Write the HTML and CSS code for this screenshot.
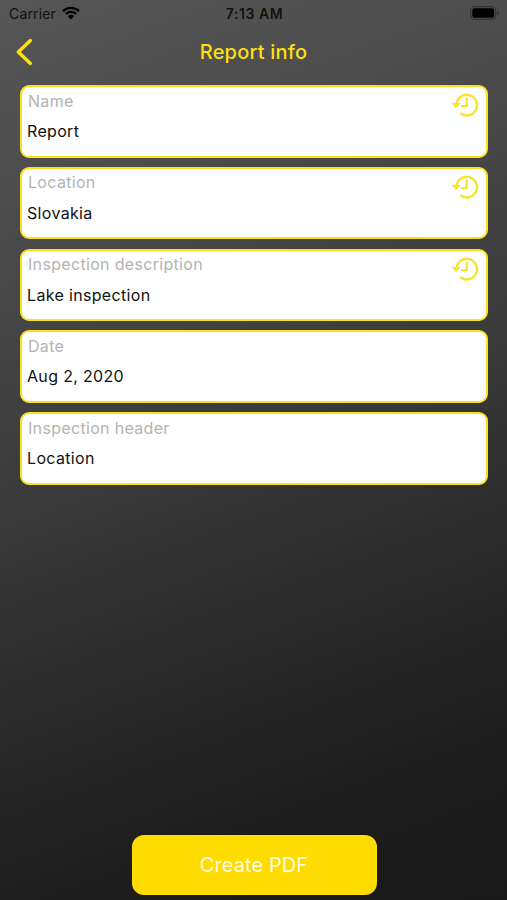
FILE: index.html
```html
<!DOCTYPE html>
<html lang="en">
<head>
<meta charset="utf-8">
<title>Report info</title>
<link rel="stylesheet" href="styles.css">
</head>
<body>
<svg class="defs" aria-hidden="true">
  <symbol id="history" viewBox="0 0 28 26">
    <path d="M5.4 12.8A10.3 10.3 0 1 1 9.3 21.2" fill="none" stroke="currentColor" stroke-width="2.4"/>
    <path d="M0.4 10.9H10L5 16Z" fill="currentColor"/>
    <path d="M15.7 5.6V14H10" fill="none" stroke="currentColor" stroke-width="2.2"/>
  </symbol>
</svg>
<div class="screen">
  <header class="status">
    <div class="carrier"><span class="carrier-name">Carrier</span>
      <svg class="wifi" viewBox="0 0 18 14"><path d="M1 5.1a11.5 11.5 0 0 1 16 0M3.9 8a7.3 7.3 0 0 1 10.2 0" fill="none" stroke="#000" stroke-width="2.3"/><path d="M5.9 10.2a4.5 4.5 0 0 1 6.2 0L9 13.4Z" fill="#000"/></svg>
    </div>
    <span class="time">7:13 AM</span>
    <svg class="battery" viewBox="0 0 30 14"><rect x=".7" y=".7" width="25" height="12.6" rx="3.8" fill="none" stroke="#343434" stroke-width="1.2"/><rect x="2.3" y="2.3" width="21.8" height="9.4" rx="2.2"/><path d="M27.3 4.8q1.8 .8 1.8 2.2t-1.8 2.2Z" fill="#343434"/></svg>
  </header>
  <nav class="nav">
    <svg class="back" viewBox="0 0 18 28"><path d="M14.4 2.6 2.3 14 14.4 25.4" fill="none" stroke="currentColor" stroke-width="3.4" stroke-linecap="round" stroke-linejoin="round"/></svg>
    <h1 class="title">Report info</h1>
  </nav>
  <main class="fields">
    <section class="field"><div class="text"><div class="label">Name</div><div class="value">Report</div></div><svg class="history"><use href="#history"/></svg></section>
    <section class="field"><div class="text"><div class="label">Location</div><div class="value">Slovakia</div></div><svg class="history"><use href="#history"/></svg></section>
    <section class="field"><div class="text"><div class="label">Inspection description</div><div class="value">Lake inspection</div></div><svg class="history"><use href="#history"/></svg></section>
    <section class="field"><div class="text"><div class="label">Date</div><div class="value">Aug 2, 2020</div></div></section>
    <section class="field"><div class="text"><div class="label">Inspection header</div><div class="value">Location</div></div></section>
  </main>
  <footer class="footer"><button class="create">Create PDF</button></footer>
</div>
</body>
</html>
```
FILE: styles.css
```css
* { box-sizing: border-box; }
body { margin: 0; font-family: Inter, "Liberation Sans", sans-serif; }
.defs { position: absolute; width: 0; height: 0; }
.screen {
  height: 900px;
  display: flex;
  flex-direction: column;
  overflow: hidden;
  background: linear-gradient(160deg, #565656 0%, #4c4c4c 20%, #3b3b3b 46%, #2a2929 68%, #1b1b1b 88%, #191919 100%);
}
.status {
  height: 28px;
  padding: 0 7px 2px 9px;
  display: grid;
  grid-template-columns: 1fr auto 1fr;
  align-items: center;
  font-size: 14px;
  color: #111;
}
.carrier { display: flex; align-items: center; gap: 6px; }
.carrier-name { letter-spacing: .15px; }
.wifi { width: 18px; height: 14px; }
.time { font-weight: 600; letter-spacing: .55px; }
.battery { width: 30px; height: 14px; justify-self: end; }
.nav {
  height: 57px;
  padding: 0 16px 9px;
  display: grid;
  grid-template-columns: 1fr auto 1fr;
  align-items: center;
  color: #fedf12;
}
.back { width: 18px; height: 28px; }
.title { margin: 0; font-size: 20px; line-height: 24px; font-weight: 500; letter-spacing: .2px; }
.fields { display: flex; flex-direction: column; gap: 9.25px; padding: 0 19px 0 20px; }
.field {
  height: 72.5px;
  display: flex;
  justify-content: space-between;
  padding: 3.5px 7px 0 5px;
  border: 2px solid #fbe01c;
  border-radius: 9px;
  background: #fff;
}
.label { padding-left: 1px; font-size: 16px; line-height: 20px; letter-spacing: .32px; color: #b3b3b3; }
.value { margin-top: 10.5px; font-size: 16px; line-height: 20px; letter-spacing: .33px; color: #111; }
.history { width: 28px; height: 26px; margin-top: 1.5px; color: #f7e52a; }
.footer { margin-top: auto; padding: 0 0 5px 1px; display: flex; justify-content: center; }
.create {
  width: 245px;
  height: 60px;
  padding: 0;
  border: 0;
  border-radius: 12px;
  background: #ffdc00;
  color: #fffbe0;
  font: 400 20px Inter, sans-serif;
  letter-spacing: .1px;
}
```
